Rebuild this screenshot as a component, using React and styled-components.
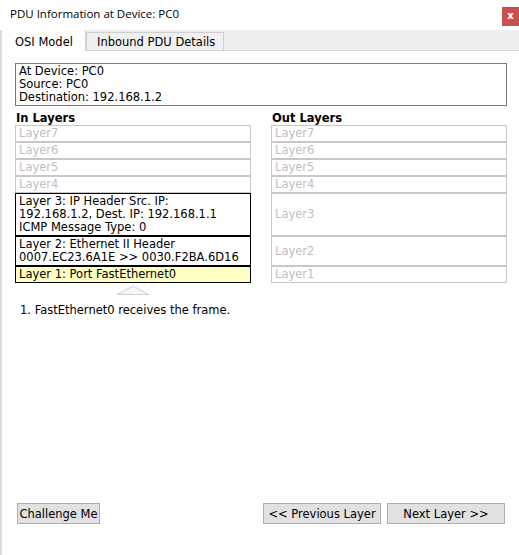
import React from "react";
import styled, { createGlobalStyle } from "styled-components";

const Global = createGlobalStyle`
  html, body { margin: 0; padding: 0; background: #fff; }
  body { font-family: "DejaVu Sans", sans-serif; }
`;

const BODY_FONT = `"DejaVu Sans", sans-serif`;

const Window = styled.div`
  width: 519px;
  height: 555px;
  display: flex;
  flex-direction: column;
  background: #fff;
  overflow: hidden;
`;

const TitleBar = styled.div`
  height: 30px;
  flex: none;
  display: flex;
  align-items: flex-start;
  padding-left: 10px;
  box-sizing: border-box;
`;

const Title = styled.div`
  font-family: "Open Sans", "Noto Sans", sans-serif;
  font-size: 11.5px;
  line-height: 30px;
  margin-top: -1px;
  color: #000;
`;

const CloseBtn = styled.div`
  margin-left: auto;
  margin-top: 7px;
  width: 17px;
  height: 19px;
  background: #c75050;
  color: #fff;
  font-family: "DejaVu Sans", sans-serif;
  font-weight: bold;
  font-size: 10px;
  line-height: 18px;
  text-align: center;
`;

const Body = styled.div`
  flex: 1;
  display: flex;
  min-height: 0;
`;

const Strip = styled.div`
  width: 2px;
  flex: none;
  background: #dedede;
`;

const Main = styled.div`
  flex: 1;
  display: flex;
  flex-direction: column;
  min-width: 0;
`;

const TabBar = styled.div`
  height: 21px;
  flex: none;
  display: flex;
  align-items: flex-end;
  background: #eeeeee;
  border-bottom: 1px solid #d6d6d6;
  box-sizing: border-box;
`;

const Tab = styled.div`
  font-family: ${BODY_FONT};
  font-size: 11.5px;
  color: #000;
  box-sizing: border-box;
  height: ${(p) => (p.$active ? "21px" : "18px")};
  margin-bottom: ${(p) => (p.$active ? "-1px" : "0")};
  padding: ${(p) => (p.$active ? "4px 12px 0 12px" : "2px 10px 0 10px")};
  width: ${(p) => p.$w}px;
  background: ${(p) => (p.$active ? "#fff" : "#f0f0f0")};
  border: 1px solid ${(p) => (p.$active ? "#fff" : "#d0d0d0")};
  border-right-color: #d0d0d0;
  border-bottom: none;
  white-space: nowrap;
`;

const Content = styled.div`
  flex: 1;
  display: flex;
  flex-direction: column;
  padding: 12px 10px 31px 13px;
  font-family: ${BODY_FONT};
  font-size: 11.5px;
  line-height: 13px;
  color: #000;
`;

const InfoBox = styled.div`
  width: 492px;
  box-sizing: border-box;
  border: 1px solid #7a7a7a;
  padding: 1px 3px;
`;

const LayerGrid = styled.div`
  display: grid;
  grid-template-columns: 236px 236px;
  column-gap: 20px;
  margin-top: 6px;
`;

const Heading = styled.div`
  font-weight: bold;
  padding-left: 1px;
  line-height: 13px;
`;

const LayerBox = styled.div`
  box-sizing: border-box;
  border: 1px solid ${(p) => (p.$on ? "#000" : "#c8c8c8")};
  background: ${(p) => (p.$cur ? "#ffffc4" : "#fff")};
  color: ${(p) => (p.$on ? "#000" : "#c0c0c0")};
  padding: 1px 3px;
  display: flex;
  flex-direction: column;
  justify-content: center;
  white-space: nowrap;
`;

const ArrowRow = styled.div`
  width: 236px;
  display: flex;
  justify-content: center;
  margin-top: 2px;
  height: 10px;
`;

const Step = styled.div`
  margin-top: 9px;
  padding-left: 5px;
`;

const Footer = styled.div`
  margin-top: auto;
  display: flex;
  padding: 0 4px 0 2px;
  gap: 6px;
`;

const Button = styled.button`
  font-family: ${BODY_FONT};
  font-size: 11.5px;
  color: #000;
  background: #e1e1e1;
  border: 1px solid #adadad;
  height: 21px;
  width: ${(p) => p.$w}px;
  padding: 0;
  margin: 0;
  box-sizing: border-box;
  ${(p) => (p.$push ? "margin-left: auto;" : "")}
`;

const left = [
  { t: ["Layer7"] },
  { t: ["Layer6"] },
  { t: ["Layer5"] },
  { t: ["Layer4"] },
  { t: ["Layer 3: IP Header Src. IP:", "192.168.1.2, Dest. IP: 192.168.1.1", "ICMP Message Type: 0"], on: true },
  { t: ["Layer 2: Ethernet II Header", "0007.EC23.6A1E >> 0030.F2BA.6D16"], on: true },
  { t: ["Layer 1: Port FastEthernet0"], on: true, cur: true },
];
const right = ["Layer7", "Layer6", "Layer5", "Layer4", "Layer3", "Layer2", "Layer1"];

export default function App() {
  return (
    <>
      <Global />
      <Window>
        <TitleBar>
          <Title>PDU Information at Device: PC0</Title>
          <CloseBtn>x</CloseBtn>
        </TitleBar>
        <Body>
          <Strip />
          <Main>
            <TabBar>
              <Tab $active $w={84}>OSI Model</Tab>
              <Tab $w={138}>Inbound PDU Details</Tab>
            </TabBar>
            <Content>
              <InfoBox>
                <div>At Device: PC0</div>
                <div>Source: PC0</div>
                <div>Destination: 192.168.1.2</div>
              </InfoBox>
              <LayerGrid>
                <Heading>In Layers</Heading>
                <Heading>Out Layers</Heading>
                {left.map((l, i) => (
                  <React.Fragment key={i}>
                    <LayerBox $on={l.on} $cur={l.cur}>
                      {l.t.map((s, j) => (
                        <div key={j}>{s}</div>
                      ))}
                    </LayerBox>
                    <LayerBox>{right[i]}</LayerBox>
                  </React.Fragment>
                ))}
              </LayerGrid>
              <ArrowRow>
                <svg width="34" height="10" viewBox="0 0 34 10">
                  <polygon points="1,9.5 17,1 33,9.5" fill="#f7f7f7" stroke="#cfcfcf" strokeWidth="1" />
                </svg>
              </ArrowRow>
              <Step>1. FastEthernet0 receives the frame.</Step>
              <Footer>
                <Button $w={83}>Challenge Me</Button>
                <Button $w={118} $push>&lt;&lt; Previous Layer</Button>
                <Button $w={118}>Next Layer &gt;&gt;</Button>
              </Footer>
            </Content>
          </Main>
        </Body>
      </Window>
    </>
  );
}
